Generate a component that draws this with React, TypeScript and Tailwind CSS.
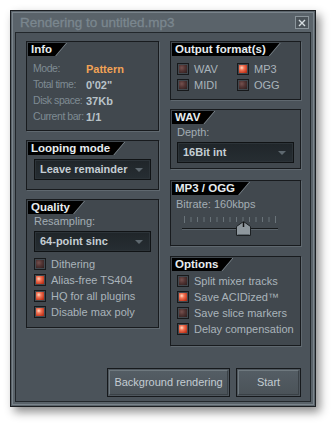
import React from "react";

const tabClip = "[clip-path:polygon(0_0,100%_0,calc(100%-11px)_100%,0_100%)]";

const Tab: React.FC<{ title: string }> = ({ title }) => (
  <div className="flex">
    <div className={`bg-[#7d878e] pr-px ${tabClip}`}>
      <div
        className={`bg-black h-[13px] pl-[3px] pr-[14px] text-[11.5px] font-bold leading-[13px] text-[#e6ecef] ${tabClip}`}
      >
        {title}
      </div>
    </div>
  </div>
);

const Panel: React.FC<{ title: string; h: string; children?: React.ReactNode }> = ({ title, h, children }) => (
  <div className={`${h} border border-[#181b1e] bg-[#41484e] p-px shadow-[1px_1px_0_#5f686f]`}>
    <Tab title={title} />
    {children}
  </div>
);

const Check: React.FC<{ on?: boolean; label: string }> = ({ on, label }) => (
  <div className="flex h-[16px] items-center gap-[5px]">
    <div className="h-[12px] w-[12px] border border-[#17191b] p-px">
      <div
        className={
          on
            ? "h-full w-full bg-[radial-gradient(circle_at_35%_35%,#ffe0c8_0%,#f4785a_30%,#c4391f_75%,#9c2a18_100%)]"
            : "h-full w-full bg-[radial-gradient(circle_at_35%_35%,#75514f_0%,#513433_45%,#2e1e1e_100%)]"
        }
      />
    </div>
    <span className="whitespace-nowrap text-[11px] leading-none text-[#aab4bb]">{label}</span>
  </div>
);

const Dropdown: React.FC<{ value: string }> = ({ value }) => (
  <div className="h-[21px] border border-[#101315] bg-[#2c3338] p-px">
    <div className="flex h-full items-center justify-between bg-[linear-gradient(#20262a,#262d32)] pl-[4px] pr-[6px]">
      <span className="text-[11px] font-bold text-[#c5ced4]">{value}</span>
      <svg width="8" height="4" viewBox="0 0 8 4">
        <path d="M0 0H8L4 4Z" fill="#5e686f" />
      </svg>
    </div>
  </div>
);

const InfoRow: React.FC<{ label: string; value: string; accent?: boolean }> = ({ label, value, accent }) => (
  <div className="flex h-[16px] items-center">
    <span className="w-[53px] whitespace-nowrap text-[10.5px] tracking-[-0.45px] text-[#7f8b93]">{label}</span>
    <span className={`whitespace-nowrap text-[11px] font-bold ${accent ? "text-[#f2a356]" : "text-[#b9c3c9]"}`}>
      {value}
    </span>
  </div>
);

const Slider: React.FC = () => (
  <svg width="100" height="24" viewBox="0 0 100 24" className="ml-[10px] mt-[3px]">
    {Array.from({ length: 15 }).map((_, i) => {
      const x = 2.5 + i * 6.5;
      const end = i === 0 || i === 14;
      return <line key={i} x1={x} x2={x} y1={end ? 1 : 2} y2={end ? 8 : 7} stroke="#697379" strokeWidth="1" />;
    })}
    <line x1="0" x2="96" y1="13.5" y2="13.5" stroke="#15181a" strokeWidth="1" />
    <line x1="0" x2="96" y1="14.5" y2="14.5" stroke="#5a636a" strokeWidth="1" />
    <path d="M54.5 20.5V11.5L61.5 6.5L68.5 11.5V20.5Z" fill="#8e979d" stroke="#1c2023" />
    <line x1="61.5" x2="61.5" y1="7" y2="12" stroke="#111" strokeWidth="1.5" />
    <line x1="55.5" x2="67.5" y1="19.5" y2="19.5" stroke="#5e676d" />
  </svg>
);

const Button: React.FC<{ label: string; w: string }> = ({ label, w }) => (
  <div className={`${w} h-[29px] border border-[#16191c] bg-[#4e565d] p-px`}>
    <div className="flex h-full items-center justify-center border border-t-[#6f797f] border-l-[#6f797f] border-r-[#3a4146] border-b-[#3a4146] bg-[linear-gradient(#545d64,#4b5359)] text-[11px] text-[#c3ccd2]">
      {label}
    </div>
  </div>
);

export default function App() {
  return (
    <div className="min-h-screen bg-white pl-[10px] pt-[10px] font-['Liberation_Sans',Arial,sans-serif]">
      <div className="h-[397px] w-[306px] border border-[#1c1f22] bg-[#5a636a] p-px shadow-[4px_5px_9px_rgba(0,0,0,0.45)]">
        <div className="flex h-full flex-col border border-[#7a848b] px-[2px] pb-[2px]">
          <div className="flex h-[19px] items-center justify-between pl-[5px] pr-[2px]">
            <span className="text-[13.5px] leading-none text-[#7b878f] [-webkit-text-stroke:0.3px_#7b878f]">
              Rendering to untitled.mp3
            </span>
            <div className="flex h-[13px] w-[14px] items-center justify-center border border-[#8b959b] bg-[#4b5359]">
              <svg width="8" height="8" viewBox="0 0 8 8">
                <path d="M1 1L7 7M7 1L1 7" stroke="#d6dde1" strokeWidth="1.4" />
              </svg>
            </div>
          </div>
          <div className="flex-1 border border-[#22272b] bg-[#4b535a] pl-[10px] pr-[8px] pt-[8px]">
            <div className="grid grid-cols-[133px_131px] gap-x-[11px]">
              <div className="flex flex-col gap-[9px]">
                <Panel title="Info" h="h-[90px]">
                  <div className="pl-[5px] pt-[5px]">
                    <InfoRow label="Mode:" value="Pattern" accent />
                    <InfoRow label="Total time:" value={"0'02\""} />
                    <InfoRow label="Disk space:" value="37Kb" />
                    <InfoRow label="Current bar:" value="1/1" />
                  </div>
                </Panel>
                <Panel title="Looping mode" h="h-[50px]">
                  <div className="px-[6px] pt-[4px]">
                    <Dropdown value="Leave remainder" />
                  </div>
                </Panel>
                <Panel title="Quality" h="h-[129px]">
                  <div className="px-[6px]">
                    <div className="text-[11px] leading-[15px] text-[#a3adb4]">Resampling:</div>
                    <div className="mt-[2px]">
                      <Dropdown value="64-point sinc" />
                    </div>
                    <div className="mt-[4px] flex flex-col">
                      <Check label="Dithering" />
                      <Check on label="Alias-free TS404" />
                      <Check on label="HQ for all plugins" />
                      <Check on label="Disable max poly" />
                    </div>
                  </div>
                </Panel>
              </div>
              <div className="flex flex-col">
                <Panel title="Output format(s)" h="h-[59px]">
                  <div className="grid grid-cols-[60px_60px] pl-[5px] pt-[5px]">
                    <Check label="WAV" />
                    <Check on label="MP3" />
                    <Check label="MIDI" />
                    <Check label="OGG" />
                  </div>
                </Panel>
                <div className="mt-[9px]">
                  <Panel title="WAV" h="h-[60px]">
                    <div className="px-[5px]">
                      <div className="pt-[1px] text-[11px] leading-[15px] text-[#a3adb4]">Depth:</div>
                      <div className="mt-[2px]">
                        <Dropdown value="16Bit int" />
                      </div>
                    </div>
                  </Panel>
                </div>
                <div className="mt-[11px]">
                  <Panel title="MP3 / OGG" h="h-[66px]">
                    <div className="pl-[4px] pt-[2px] text-[11px] leading-[15px] text-[#a3adb4]">Bitrate: 160kbps</div>
                    <Slider />
                  </Panel>
                </div>
                <div className="mt-[10px]">
                  <Panel title="Options" h="h-[90px]">
                    <div className="pl-[5px] pt-[2px]">
                      <Check label="Split mixer tracks" />
                      <Check on label="Save ACIDized™" />
                      <Check label="Save slice markers" />
                      <Check on label="Delay compensation" />
                    </div>
                  </Panel>
                </div>
              </div>
            </div>
            <div className="mt-[22px] flex justify-end gap-[6px] pr-[1px]">
              <Button label="Background rendering" w="w-[123px]" />
              <Button label="Start" w="w-[65px]" />
            </div>
          </div>
        </div>
      </div>
    </div>
  );
}
